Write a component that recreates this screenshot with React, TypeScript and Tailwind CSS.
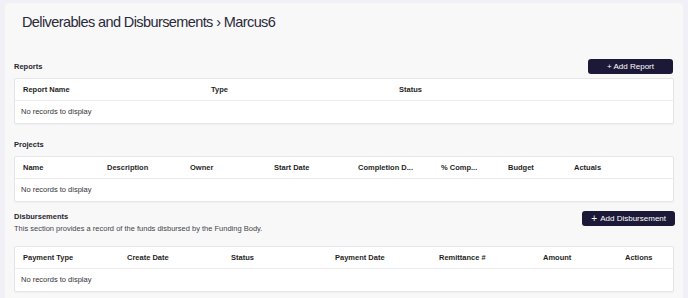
import React from "react";

const font = { fontFamily: '"Liberation Sans", Arial, sans-serif' };

type Col = { label: string; w: number };

function DataTable({ cols }: { cols: Col[] }) {
  return (
    <div className="bg-white border border-[#e6e6ea] rounded-[2px] shadow-[0_1px_2px_rgba(0,0,0,0.04)]">
      <div className="flex h-[22px] items-center border-b border-[#ececef] pl-[8px]">
        {cols.map((c) => (
          <div key={c.label} className="shrink-0 text-[7.5px] font-bold text-[#1f1f24]" style={{ width: c.w }}>
            {c.label}
          </div>
        ))}
      </div>
      <div className="flex h-[22px] items-center pl-[6px] text-[7.5px] text-[#333338]">No records to display</div>
    </div>
  );
}

function AddButton({ children }: { children: React.ReactNode }) {
  return (
    <button className="h-[15px] px-[9px] rounded-[3px] bg-[#1c1838] text-white text-[8px] leading-none flex items-center gap-[3px]">
      {children}
    </button>
  );
}

export default function App() {
  return (
    <div className="w-[688px] h-[298px] overflow-hidden bg-[#f0f0f6] pl-[5px] pr-[5px] pt-[3px]" style={font}>
      <div className="h-[310px] rounded-[4px] bg-[#f8f8f9] pl-[9px] pr-[7px]">
        <div className="h-[39px] pl-[8px] pt-[12px] text-[14.5px] tracking-[-0.6px] text-[#2b2a3a] leading-none">
          Deliverables and Disbursements › Marcus6
        </div>

        <div className="mt-[16px] flex items-end justify-between h-[18px]">
          <div className="pb-[4px] text-[7.5px] font-bold text-[#26262c]">Reports</div>
          <div className="pb-[2px] pr-[3px]">
            <AddButton>
              <span className="px-[10px]">+ Add Report</span>
            </AddButton>
          </div>
        </div>
        <div className="mt-[2px] mr-[2px]">
          <DataTable
            cols={[
              { label: "Report Name", w: 188 },
              { label: "Type", w: 188 },
              { label: "Status", w: 188 },
            ]}
          />
        </div>

        <div className="mt-[15px] h-[10px] text-[7.5px] font-bold text-[#26262c]">Projects</div>
        <div className="mt-[7px] mr-[2px]">
          <DataTable
            cols={[
              { label: "Name", w: 84 },
              { label: "Description", w: 83 },
              { label: "Owner", w: 84 },
              { label: "Start Date", w: 84 },
              { label: "Completion D...", w: 83 },
              { label: "% Comp...", w: 67 },
              { label: "Budget", w: 66 },
              { label: "Actuals", w: 66 },
            ]}
          />
        </div>

        <div className="mt-[4px] flex items-start justify-between mr-[1px]">
          <div className="pt-[6px]">
            <div className="text-[7.5px] font-bold text-[#26262c] leading-[10px]">Disbursements</div>
            <div className="mt-[2px] text-[7.5px] text-[#45454c] leading-[10px]">
              This section provides a record of the funds disbursed by the Funding Body.
            </div>
          </div>
          <div className="pt-[5px]">
            <AddButton>
              <span className="text-[10px] leading-none">+</span>
              <span>Add Disbursement</span>
            </AddButton>
          </div>
        </div>
        <div className="mt-[12px] mr-[2px]">
          <DataTable
            cols={[
              { label: "Payment Type", w: 104 },
              { label: "Create Date", w: 104 },
              { label: "Status", w: 104 },
              { label: "Payment Date", w: 104 },
              { label: "Remittance #", w: 104 },
              { label: "Amount", w: 82 },
              { label: "Actions", w: 50 },
            ]}
          />
        </div>
      </div>
    </div>
  );
}
